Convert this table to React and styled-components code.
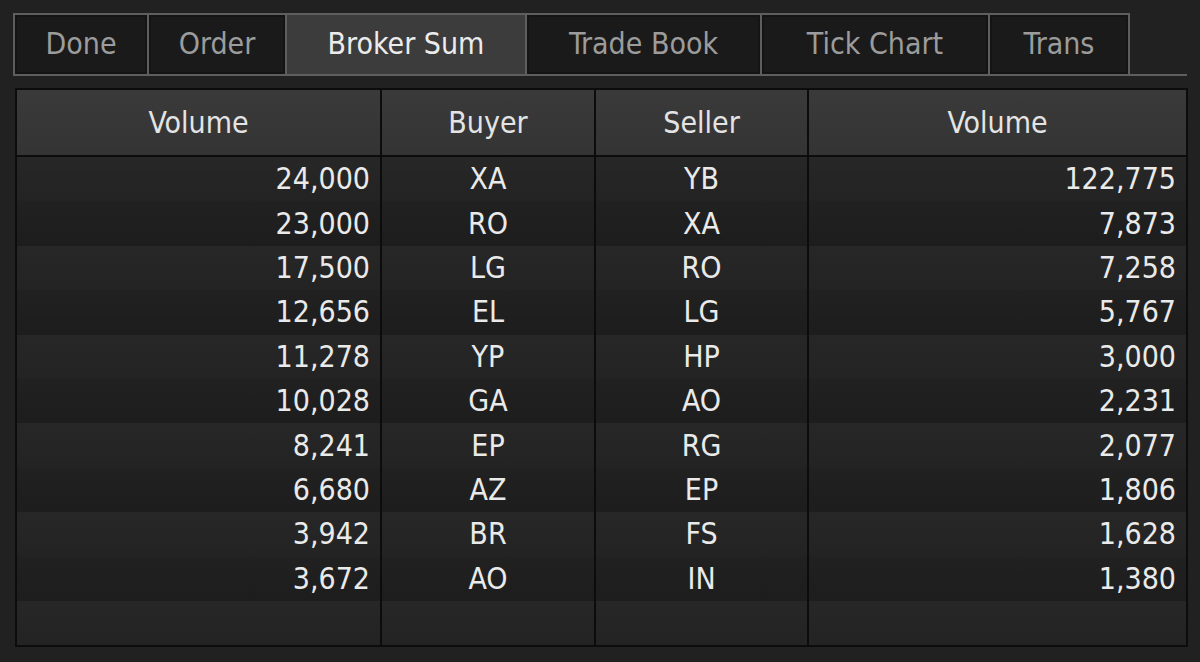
import React from "react";
import styled, { createGlobalStyle } from "styled-components";

const Global = createGlobalStyle`
  html, body { margin: 0; padding: 0; background: #212121; }
  body { font-family: "DejaVu Sans Condensed", "DejaVu Sans", Tahoma, sans-serif; }
`;

const Page = styled.div`
  width: 1200px;
  height: 662px;
  box-sizing: border-box;
  padding: 13px 12px 0 13px;
  background: #212121;
  display: flex;
  flex-direction: column;
  gap: 12px;
  overflow: hidden;
`;

const TabBar = styled.div`
  display: flex;
  height: 63px;
  box-sizing: border-box;
  border-bottom: 2px solid #5e5e5e;
  width: 1174px;
`;

const Tab = styled.div`
  width: ${(p) => p.$w}px;
  box-sizing: border-box;
  border-top: 2px solid #5e5e5e;
  border-left: 2px solid #5e5e5e;
  border-right: ${(p) => (p.$last ? "2px solid #5e5e5e" : "none")};
  background: ${(p) => (p.$active ? "#3c3c3c" : "#1a1a1a")};
  box-shadow: ${(p) => (p.$active ? "none" : "inset 0 0 0 2px #141414")};
  color: ${(p) => (p.$active ? "#ececec" : "#9c9c9c")};
  font-size: 30px;
  display: flex;
  align-items: center;
  justify-content: center;
  padding-bottom: 2px;
`;

const Table = styled.div`
  width: 1173px;
  margin-left: 2px;
  box-sizing: border-box;
  border: 2px solid #0c0c0c;
  background: #0c0c0c;
  display: grid;
  grid-template-columns: 363px 212px 211px 377px;
  grid-template-rows: 67px repeat(11, 44.4px);
  column-gap: 2px;
`;

const HeadCell = styled.div`
  background: linear-gradient(#3a3a3a, #343434);
  border-bottom: 2px solid #0c0c0c;
  color: #e4e4e4;
  font-size: 30px;
  display: flex;
  align-items: center;
  justify-content: center;
  box-sizing: border-box;
`;

const Cell = styled.div`
  background: ${(p) =>
    p.$odd
      ? "linear-gradient(#212121, #1d1d1d)"
      : "linear-gradient(#272727, #232323)"};
  color: #eaeaea;
  font-size: 30px;
  display: flex;
  align-items: center;
  justify-content: ${(p) => (p.$right ? "flex-end" : "center")};
  padding-right: ${(p) => (p.$right ? "10px" : "0")};
  padding-bottom: 1px;
  box-sizing: border-box;
`;

const tabs = [
  { label: "Done", w: 134 },
  { label: "Order", w: 138 },
  { label: "Broker Sum", w: 240, active: true },
  { label: "Trade Book", w: 235 },
  { label: "Tick Chart", w: 228 },
  { label: "Trans", w: 142, last: true },
];

const rows = [
  ["24,000", "XA", "YB", "122,775"],
  ["23,000", "RO", "XA", "7,873"],
  ["17,500", "LG", "RO", "7,258"],
  ["12,656", "EL", "LG", "5,767"],
  ["11,278", "YP", "HP", "3,000"],
  ["10,028", "GA", "AO", "2,231"],
  ["8,241", "EP", "RG", "2,077"],
  ["6,680", "AZ", "EP", "1,806"],
  ["3,942", "BR", "FS", "1,628"],
  ["3,672", "AO", "IN", "1,380"],
  ["", "", "", ""],
];

export default function App() {
  return (
    <>
      <Global />
      <Page>
        <TabBar>
          {tabs.map((t) => (
            <Tab key={t.label} $w={t.w} $active={t.active} $last={t.last}>
              {t.label}
            </Tab>
          ))}
        </TabBar>
        <Table>
          {["Volume", "Buyer", "Seller", "Volume"].map((h, i) => (
            <HeadCell key={i}>{h}</HeadCell>
          ))}
          {rows.map((r, ri) =>
            r.map((v, ci) => (
              <Cell
                key={ri + "-" + ci}
                $odd={ri % 2 === 1}
                $right={ci === 0 || ci === 3}
              >
                {v}
              </Cell>
            ))
          )}
        </Table>
      </Page>
    </>
  );
}
